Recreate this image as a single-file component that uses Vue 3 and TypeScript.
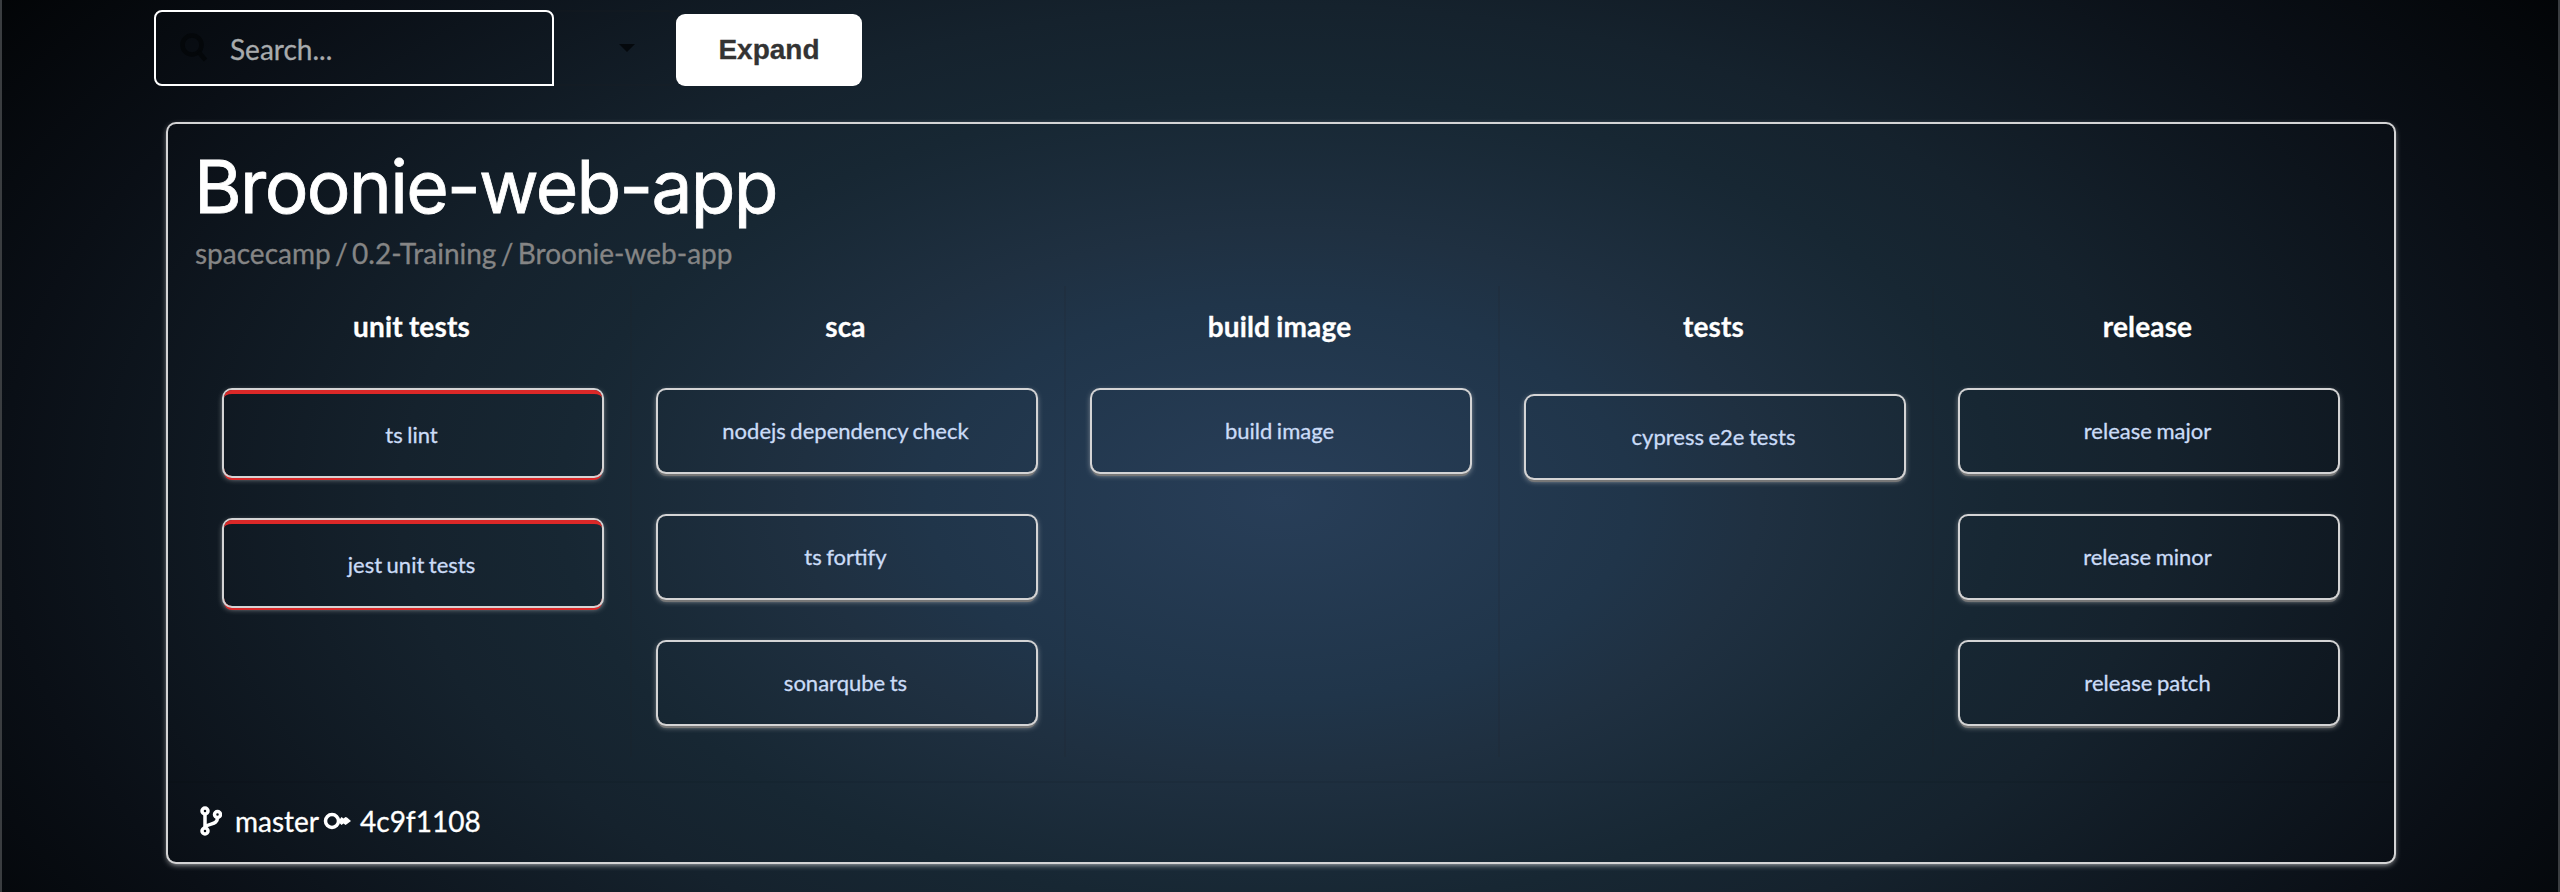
<script setup lang="ts">
interface Job { name: string; failed?: boolean }
interface Stage { name: string; offset?: boolean; jobs: Job[] }

const stages: Stage[] = [
  { name: 'unit tests', jobs: [{ name: 'ts lint', failed: true }, { name: 'jest unit tests', failed: true }] },
  { name: 'sca', jobs: [{ name: 'nodejs dependency check' }, { name: 'ts fortify' }, { name: 'sonarqube ts' }] },
  { name: 'build image', jobs: [{ name: 'build image' }] },
  { name: 'tests', offset: true, jobs: [{ name: 'cypress e2e tests' }] },
  { name: 'release', jobs: [{ name: 'release major' }, { name: 'release minor' }, { name: 'release patch' }] },
]
</script>

<template>
  <main class="page">
    <header class="toolbar">
      <label class="search">
        <svg class="search-icon" viewBox="0 0 28 30"><circle cx="12" cy="12" r="9.500" /><path d="M18.500 19l7 8" /></svg>
        <input type="text" placeholder="Search..." />
      </label>
      <div class="dropdown"><svg viewBox="0 0 16 8"><path d="M0 0h16l-8 8z" /></svg></div>
      <button class="expand" type="button">Expand</button>
    </header>

    <section class="project">
      <h1>Broonie-web-app</h1>
      <p class="path">spacecamp / 0.2-Training / Broonie-web-app</p>
      <div class="stages">
        <div v-for="stage in stages" :key="stage.name" class="stage">
          <h2>{{ stage.name }}</h2>
          <div class="jobs" :class="{ offset: stage.offset }">
            <div v-for="job in stage.jobs" :key="job.name" class="job" :class="{ failed: job.failed }">{{ job.name }}</div>
          </div>
        </div>
      </div>
      <footer>
        <svg class="branch" viewBox="0 0 22 30">
          <circle cx="5" cy="5" r="3" /><circle cx="5" cy="25" r="3" /><circle cx="17.500" cy="8.500" r="3" />
          <path d="M5 8v14M17.500 11.500c0 7-6.500 5.500-12 9" />
        </svg>
        <span class="ref">master</span>
        <svg class="key" viewBox="0 0 28 18">
          <circle cx="9" cy="9" r="6.500" /><path d="M15 9h9" /><path class="fill" d="M17 7v4.500l1.500 1.500 2-1.500 2 1.500 1.500-1 4-3-4-3.500-1.500-.5-2 1.500-2-1.500z" />
        </svg>
        <span class="hash">4c9f1108</span>
      </footer>
    </section>
  </main>
</template>

<style>
body { margin: 0; }
</style>

<style scoped>
* { box-sizing: border-box; }
.page {
  height: 892px;
  overflow: hidden;
  padding: 10px 164px 0 152px;
  border: solid #3a3d40;
  border-width: 0 2px;
  background: radial-gradient(ellipse 1600px 900px at 1278px 500px, #283e58 0%, #20354a 22%, #1f3041 30%, #172733 45%, #15222d 55%, #0a0f16 80%, #020406 98%);
  font-family: Lato, "Liberation Sans", sans-serif;
  font-size: 28px;
  word-spacing: -0.1em;
  -webkit-text-stroke: 0.3px;
  color: #fff;
}
.toolbar { display: flex; height: 76px; }
.search {
  display: flex;
  flex: none;
  align-items: center;
  width: 400px;
  height: 76px;
  border: 2px solid #fff;
  border-radius: 8px 8px 0 8px;
}
.search-icon { flex: none; width: 28px; height: 30px; margin: 0 0 1px 24px; fill: none; stroke: #04070a; stroke-width: 4.500; }
input {
  width: 300px;
  margin: 2px 0 0 22px;
  padding: 0;
  border: 0;
  outline: 0;
  background: none;
  color: #fff;
  font: 28px Lato, sans-serif;
}
input::placeholder { color: #a8abad; opacity: 1; }
.dropdown {
  width: 122px;
  padding: 32px 0 0 65px;
  border: 2px solid rgba(34, 36, 38, 0.15);
  border-left: 0;
  border-radius: 0 8px 8px 0;
}
.dropdown svg { display: block; width: 16px; height: 8px; fill: #05090d; }
.expand {
  width: 186px;
  height: 72px;
  margin-top: 4px;
  padding: 0;
  border: 0;
  border-radius: 9px;
  background: #fff;
  color: #333;
  font: bold 28px "Liberation Sans", sans-serif;
}
.project {
  height: 738px;
  margin: 38px 0 0 14px;
  border-radius: 8px;
  box-shadow: 0 0 0 2px #d4d4d5, 0 2px 6px #d4d4d5;
}
h1 { margin: 0; padding: 16px 0 0 26px; font: 400 73px/94px Inter, sans-serif; letter-spacing: -1.700px; -webkit-text-stroke: 0.8px; }
.path { margin: 0; padding-left: 27px; color: #858585; line-height: 38px; }
.stages { display: grid; grid-template-columns: repeat(5, 434px); height: 509px; padding: 14px 0 24px 28px; }
.stage { padding-top: 20px; }
.stage + .stage { border-left: 2px solid rgba(34, 36, 38, 0.15); }
h2 { margin: 0; padding-right: 3px; font-size: 28px; line-height: 40px; text-align: center; word-spacing: -0.03em; letter-spacing: 0.15px; }
.stage + .stage h2 { padding-right: 5px; }
.jobs { display: flex; flex-direction: column; gap: 44px; padding: 44px 28px 0; }
.stage + .stage .jobs { padding-left: 26px; }
.jobs.offset { padding-top: 50px; }
.job {
  height: 82px;
  padding-right: 3px;
  border-radius: 8px;
  box-shadow: 0 0 0 2px #d4d4d5, 0 4px 0 #777, 0 2px 6px #d4d4d5;
  color: #cbdcf7;
  font-size: 22px;
  line-height: 82px;
  text-align: center;
  word-spacing: -0.05em;
}
footer { display: flex; align-items: center; height: 83px; padding: 0 0 6px 28px; border-top: 2px solid rgba(0, 0, 0, 0.05); }
footer svg { fill: none; stroke: #fff; stroke-width: 3.500; }
.branch { width: 22px; height: 30px; margin-left: 4px; }
.ref { margin-left: 13px; }
.key { width: 28px; height: 18px; margin: 0 9px 0 4px; }
.key .fill { fill: #fff; stroke: none; }
.job.failed {
  height: 86px;
  border-top: 4px solid #db2828;
  box-shadow: 0 0 0 2px #d4d4d5, 0 4px 0 #db2828, 0 2px 6px #d4d4d5;
}
</style>
